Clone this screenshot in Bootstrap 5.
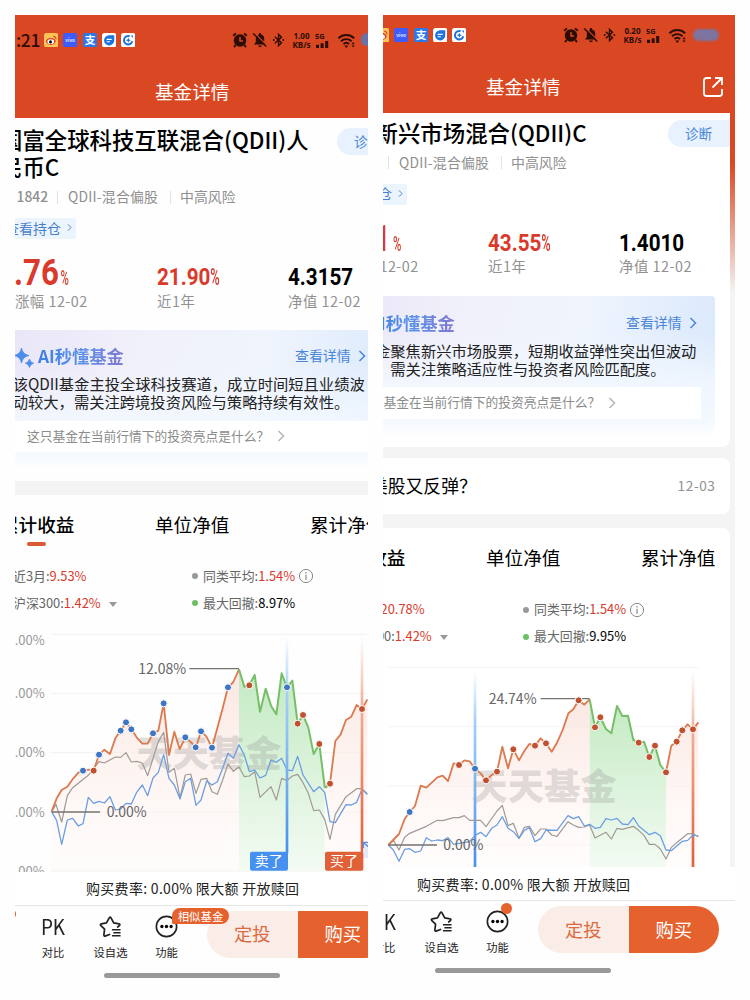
<!DOCTYPE html>
<html lang="zh-CN">
<head>
<meta charset="utf-8">
<meta name="viewport" content="width=device-width, initial-scale=1">
<title>基金详情</title>
<link href="https://cdn.jsdelivr.net/npm/bootstrap@5.3.0/dist/css/bootstrap.min.css" rel="stylesheet">
<style>
body{background:#fefefe;font-family:"Noto Sans CJK SC",sans-serif;color:#000;height:1000px;overflow:hidden;padding:15px;line-height:1}
.phone{width:352.5px;height:970px;overflow:hidden}
.screen{width:424px;margin-left:-35px}
.phone-b .screen{margin-left:-71.5px}
.screen div,.screen span{white-space:nowrap}
.top-bar{background:#d94822}
.status{height:50px;color:#2b0d06;padding-left:36px}
.phone-b .status{height:45px}
.clock{font:500 17.5px/1 "Noto Sans CJK SC";width:28px;letter-spacing:-.4px}
.app-ic{width:14.3px;height:14.3px;margin-right:5px}
.net{font:700 8px/9px "Noto Sans",sans-serif;width:20px;text-align:center;margin-left:6px}
.title-row{height:53px;color:#fff;font-size:18.6px;padding-left:175px}
.phone-b .sheet{background:linear-gradient(#d94822 0,#d94822 50px,#f4f4f4 180px)}
.phone-b .panel{width:418.5px;background:#fff;border-radius:0 0 8px 0}
.fund{padding:8px 0 1.5px 20px;font-weight:500;font-size:22.4px;line-height:27px}
.phone-b .fund{padding:5.5px 0 1.5px 64.6px}
.diag{left:357px;top:10px;width:70px;height:27px;border-radius:14px 0 0 14px;background:#e8f2fe;color:#4a86d4;font-size:13.6px;padding-left:17px}
.phone-b .diag{top:7px;width:61.5px}
.meta{height:31px;font-size:13.9px;color:#8f8f8f;padding-left:20px}
.meta i{width:1px;height:13px;background:#e2e2e2}
.code-no{width:57px;padding-left:16.5px;font-weight:500}
.kind{width:112px;padding-left:10px;letter-spacing:.2px}
.risk{padding-left:9px}
.tag-row{height:32px;padding-left:20px}
.hold{height:21px;width:76px;background:#ecf4fe;color:#4a80c9;font-size:14px;border-radius:2px;padding:0 0 2px 5px}
.nums{height:45px}
.din{font-family:Roboto,sans-serif;font-weight:700;transform-origin:0 50%;display:inline-block}
.red{color:#d93a2b}
.din small{font-weight:500;display:inline-block;transform-origin:0 50%}
.c1{width:177px;padding-left:20px}.c2{width:131px}
.c1,.c2{flex:none}
.labs{height:23px;font-size:14.4px;letter-spacing:.5px;color:#919191;margin-bottom:17px}
.phone-b .labs{margin-bottom:18px}
.ai{height:140.5px;padding-top:10px;background:linear-gradient(180deg,rgba(244,249,255,0) 25%,rgba(243,248,255,.85) 62%,#f3f9fe 88%,#fff 100%),linear-gradient(100deg,#eae6f8 8%,#f0f0fa 35%,#eff4fd 65%,#d8e8fc 100%)}
.phone-b .ai{width:404px;border-radius:0 4px 0 0;}
.ai-head{height:33px;padding-left:34px}
.ai-name{font-size:17.3px;font-weight:700;width:88px;background:linear-gradient(90deg,#3d7fe4,#5b92e8 50%,#8477cf);-webkit-background-clip:text;background-clip:text;color:transparent;line-height:24px}
.blue{color:#4a86d8;font-size:13.9px}
.say{margin:1.5px 0 0 32.7px;font-size:15.3px;line-height:18px;color:#222}
.ask{margin:10.5px 23px 0 33px;height:31.5px;background:#fff;font-size:12.75px;color:#8b8b8b;padding-left:14px}
.ask svg{color:#b5b5b5;margin-left:8px}
.phone-a .ask{margin-right:0}
.phone-b .ask{margin-right:19px}
.band{height:14px;background:#f4f4f4}
.tabs{height:61px;font-size:18.6px;padding-bottom:2px}
.bar{left:47px;top:47.5px;width:19px;height:4px;border-radius:2px;background:#d95a35}
.legend{margin-top:7px;font-size:12.9px;color:#666}
.legend>div{height:27px}
.legend .info-i{margin-left:3px}
.dot-i{width:6px;height:6px;border-radius:50%;background:#999;margin-right:5px}
.fee{height:34px;border-bottom:1px solid #e6e6e6;font-size:14px;letter-spacing:.3px;color:#222;padding-left:106px;background:#fff}
.dock{height:67px;padding-top:5px;color:#222}
.tool{font-size:11.3px}
.pill{height:47px;width:181px;border-radius:24px;overflow:hidden;font-size:18.3px;left:227px;top:5px}
.pill div{width:90.5px;padding-bottom:1px}
.home{width:176px;height:5px;border-radius:3px;background:#999;margin-left:124px}
.bub{background:#e5622f;color:#fff}
svg{display:block;flex:none}
svg text{font-family:"Noto Sans CJK SC",sans-serif}
.pts circle{r:10.5px}
.mid{font-size:24px;transform:translateY(10px) scaleX(.86)}
.mid small{font-size:24px;transform:scaleX(.62)}
.big-a,.big-b{font-size:36px;transform:translateY(6px) scaleX(.87)}
.big-a{margin-left:-4px}
.big-b{margin-left:42px}
.big-a small,.big-b small{font-size:21px;transform:scaleX(.62);margin-left:2px}
.t1{margin-left:20px;font-weight:500}
.l1{width:212px;padding-left:33px}
.news{height:56px;margin:11.5px 0 14px;border-radius:0 8px 8px 0!important;padding:0 14px 0 59px;font-size:17.8px}
.date{font-size:13.6px;color:#919191;letter-spacing:.6px}
.chart-card{border-radius:0 8px 0 0!important}
.tools{padding-left:53px}
.tool svg,.pk{height:23px;margin-top:4px}
.tool svg{width:23px}
.pk{display:block;font:400 21px/23px "Noto Sans CJK SC";transform:scaleX(.9)}
.tool div{margin-top:8px;line-height:12px}
.tl1{width:40px}.tl2{width:36px;margin-left:19.5px}.tl3{width:36px;margin-left:20px}
.simi{left:192px;top:2px;width:57px;height:16px;border-radius:8px 8px 8px 1px;font-size:11.4px;line-height:16px;text-align:center;z-index:2}
.rdot{left:190px;top:2px;width:11.4px;height:11.4px;border-radius:50%}
.buy1{background:#faece7;color:#dd6a40}
</style>
</head>
<body>
<svg width="0" height="0" class="position-absolute">
<defs>
<symbol id="weibo" viewBox="0 0 14 14"><rect width="14" height="14" rx="2.5" fill="#fbc256"/><ellipse cx="6.7" cy="8.2" rx="4.6" ry="3.4" fill="#d8321f"/><ellipse cx="6.6" cy="8.5" rx="3.3" ry="2.3" fill="#fff"/><circle cx="6.4" cy="8.7" r="1.5" fill="#111"/><path d="M9 3.2a2.7 2.7 0 0 1 2.7 3" stroke="#d8321f" stroke-width="1" fill="none"/></symbol>
<symbol id="vivo" viewBox="0 0 14 14"><rect width="14" height="14" rx="2.5" fill="#3d5cfa"/><text x="7" y="8.6" font-size="4.6" text-anchor="middle" fill="#dfe5ff" font-weight="700">vivo</text></symbol>
<symbol id="zhi" viewBox="0 0 14 14"><rect width="14" height="14" rx="2.5" fill="#2a78ea"/><text x="7" y="10.8" font-size="10.5" text-anchor="middle" fill="#fff" font-weight="700">支</text></symbol>
<symbol id="appd" viewBox="0 0 14 14"><rect width="14" height="14" rx="2.5" fill="#fff"/><path d="M7 2.2H12V7A5 5 0 1 1 7 2.2Z" fill="#1d74dc"/><path d="M4.5 6.2h5M4.500 8.6h3.2" stroke="#fff" stroke-width="1.1"/></symbol>
<symbol id="appe" viewBox="0 0 14 14"><rect width="14" height="14" rx="2.5" fill="#fff"/><path d="M8.500 3.300A4.1 4.1 0 1 0 11 8" fill="none" stroke="#1d74dc" stroke-width="1.9"/><path d="M7.2 4.6l.8 1.7 1.8.8-1.8.8-.8 1.7-.8-1.7-1.8-.8 1.8-.8zM9.4 2.5h2.3v2.4z" fill="#1d74dc"/></symbol>
<symbol id="alarm" viewBox="0 0 16 16"><circle cx="8" cy="8.500" r="6.2" fill="#2b0d06"/><path d="M1.2 3.8 4 1.4M14.8 3.8 12 1.4M3.6 13.2 2 15M12.4 13.2l1.6 1.8" stroke="#2b0d06" stroke-width="1.9"/><path d="M8 5v4h3" stroke="#d94822" stroke-width="1.5" fill="none"/></symbol>
<symbol id="bell" viewBox="0 0 16 16"><path d="M2 12.5 3.8 10V6.5A4.3 4.3 0 0 1 7 2.4V1h2v1.4a4.3 4.3 0 0 1 3.2 4.1V10l1.8 2.5zM6.2 13.5h3.6a1.8 1.8 0 0 1-3.6 0z" fill="#2b0d06"/><path d="M2.2.6 15 13.4" stroke="#d94822" stroke-width="1.3"/><path d="M1.2 1.4 14.2 14.6" stroke="#2b0d06" stroke-width="1.4"/></symbol>
<symbol id="bt" viewBox="0 0 14 16"><path d="M3 4.500 10.2 11 7 14V2l3.2 3L3 11.500" fill="none" stroke="#2b0d06" stroke-width="1.5"/><circle cx="1.8" cy="8" r="1" fill="#2b0d06"/><circle cx="12.2" cy="8" r="1" fill="#2b0d06"/></symbol>
<symbol id="sig" viewBox="0 0 18 17"><text x="0" y="6.8" font-size="7.4" style="font-family:'Noto Sans'" font-weight="700" fill="#2b0d06">5G</text><path d="M1 12.8h3V16H1zM5.6 11.2h3V16h-3zM10.2 9h3v7h-3z" fill="#2b0d06"/></symbol>
<symbol id="wifi" viewBox="0 0 20 17"><path d="M1.4 6.2a11.5 11.5 0 0 1 15.8 0M4 9.2a7.8 7.8 0 0 1 10.6 0M6.5 12a4.2 4.2 0 0 1 5.6 0" fill="none" stroke="#2b0d06" stroke-width="1.9"/><path d="M7.3 13.6h4l-2 2.3zM14.5 12.2l1.6-2.2 1.6 2.2zM14.5 13.4l1.6 2.2 1.6-2.2z" fill="#2b0d06"/></symbol>
<symbol id="chev" viewBox="0 0 8 14"><path d="M1.5 2 6.5 7l-5 5" fill="none" stroke="currentColor" stroke-width="1.5"/></symbol>
<symbol id="info" viewBox="0 0 16 16"><circle cx="8" cy="8" r="6.6" fill="none" stroke="#888" stroke-width="1"/><path d="M8 6.8v5M8 4v1.4" stroke="#888" stroke-width="1.2"/></symbol>
<symbol id="spark" viewBox="0 0 20 20"><path d="M7.5 0Q8.6 6.4 15 7.5 8.6 8.6 7.5 15 6.4 8.6 0 7.5 6.4 6.4 7.5 0ZM15.5 11q.7 3.6 4.2 4.2-3.5.7-4.2 4.3-.7-3.6-4.2-4.3 3.5-.6 4.2-4.2z" fill="#4c8cea" stroke="#4c8cea" stroke-width=".8"/></symbol>
<symbol id="star" viewBox="0 0 24 24"><path d="M11 20.3 6.3 22Q5 22 5.1 20.8L5.8 14.8 1.7 10.8Q1 9.7 2.4 9.3L7.8 8.2 10.8 2.8Q11.6 1.8 12.4 2.8L15.3 8.2 21 9.3Q22.3 9.7 21.5 10.8L19.5 12.5" fill="none" stroke="#222" stroke-width="1.8" stroke-linejoin="round" stroke-linecap="round"/><path d="M13.5 15.3H22.500M15 18.5h7.500M13.5 21.7H22.500" stroke="#222" stroke-width="1.6"/></symbol>
<symbol id="more" viewBox="0 0 24 24"><circle cx="12" cy="12" r="10.6" fill="none" stroke="#222" stroke-width="1.700"/><circle cx="7.2" cy="12" r="1.700"/><circle cx="12" cy="12" r="1.700"/><circle cx="16.8" cy="12" r="1.700"/></symbol>
<linearGradient id="gOr" x1="0" y1="0" x2="0" y2="1"><stop offset="0" stop-color="#fae3dc" stop-opacity=".85"/><stop offset="1" stop-color="#fff6f3" stop-opacity=".25"/></linearGradient>
<linearGradient id="gGr" x1="0" y1="0" x2="0" y2="1"><stop offset="0" stop-color="#c3eac2"/><stop offset="1" stop-color="#f3fbf3"/></linearGradient>
<linearGradient id="lBl" x1="0" y1="0" x2="0" y2="1"><stop offset="0" stop-color="#a8d4fb" stop-opacity="0"/><stop offset=".25" stop-color="#a5d0f9"/><stop offset=".6" stop-color="#7db4f0"/><stop offset="1" stop-color="#4690f0"/></linearGradient>
<linearGradient id="lOr" x1="0" y1="0" x2="0" y2="1"><stop offset="0" stop-color="#f3c0aa" stop-opacity="0"/><stop offset=".3" stop-color="#efb199"/><stop offset="1" stop-color="#e06037"/></linearGradient>
</defs>
</svg>

<div class="d-flex justify-content-between">
<!-- 左侧手机 -->
<section class="phone phone-a"><div class="screen">
 <div class="top-bar">
  <div class="status d-flex align-items-center">
   <span class="clock">:21</span>
   <svg class="app-ic"><use href="#weibo"/></svg><svg class="app-ic"><use href="#vivo"/></svg><svg class="app-ic"><use href="#zhi"/></svg><svg class="app-ic"><use href="#appd"/></svg><svg class="app-ic"><use href="#appe"/></svg>
   <svg width="16" height="16" style="margin-left:92px"><use href="#alarm"/></svg><svg width="16" height="16" class="ms-1"><use href="#bell"/></svg><svg width="13" height="16" class="ms-1"><use href="#bt"/></svg>
   <div class="net">1.00<br>KB/s</div><svg width="18" height="17" class="ms-1"><use href="#sig"/></svg><svg width="20" height="17" class="ms-1"><use href="#wifi"/></svg>
   <svg width="28" height="14" class="ms-1"><rect width="28" height="13" rx="6" fill="#6c70a8"/></svg>
  </div>
  <div class="title-row d-flex align-items-center">基金详情</div>
 </div>
 <div class="sheet"><div class="panel position-relative">
  <div class="fund">国富全球科技互联混合(QDII)人<br>民币C</div>
  <div class="diag position-absolute d-flex align-items-center">诊断</div>
  <div class="meta d-flex align-items-center"><span class="code-no">1842</span><i></i><span class="kind">QDII-混合偏股</span><i></i><span class="risk">中高风险</span></div>
  <div class="tag-row d-flex align-items-center"><div class="hold d-flex align-items-center">查看持仓<svg width="5" height="9" style="margin-left:6px"><use href="#chev"/></svg></div></div>
  <div class="nums d-flex align-items-center"><div class="c1"><span class="din red big-a">0.76<small>%</small></span></div><div class="c2"><span class="din red mid">21.90<small>%</small></span></div><div><span class="din mid">4.3157</span></div></div>
  <div class="labs d-flex align-items-center"><span class="c1">日涨幅 12-02</span><span class="c2">近1年</span><span>净值 12-02</span></div>
  <div class="ai">
   <div class="ai-head d-flex align-items-center"><svg width="20" height="20" class="mt-1"><use href="#spark"/></svg><span class="ai-name ms-1">AI秒懂基金</span><span class="blue d-flex align-items-center" style="margin-left:169px">查看详情<svg width="8" height="14" style="margin-left:7px"><use href="#chev"/></svg></span></div>
   <div class="say">该QDII基金主投全球科技赛道，成立时间短且业绩波<br>动较大，需关注跨境投资风险与策略持续有效性。</div>
   <div class="ask d-flex align-items-center">这只基金在当前行情下的投资亮点是什么？<svg width="8" height="14"><use href="#chev"/></svg></div>
  </div>
  <div style="height:10.5px"></div>
 </div>
 <div class="band"></div>
 <div class="tabs position-relative d-flex align-items-center"><span style="width:155px" class="t1">累计收益</span><span style="width:155px">单位净值</span><span>累计净值</span><i class="bar position-absolute"></i></div>
 <div class="legend">
  <div class="d-flex align-items-center"><span class="l1">近3月:<b class="fw-normal red">9.53%</b></span><i class="dot-i"></i><span>同类平均:<b class="fw-normal red">1.54%</b></span><svg width="16" height="16" class="info-i"><use href="#info"/></svg></div>
  <div class="d-flex align-items-center"><span class="l1">沪深300:<b class="fw-normal red">1.42%</b><svg class="d-inline ms-2" width="8" height="5"><path d="M0 0h8L4 5z" fill="#999"/></svg></span><i class="dot-i" style="background:#6cc065"></i><span>最大回撤:<b class="fw-normal text-black">8.97%</b></span></div>
 </div>
 <svg style="margin-top:15.5px" width="424" height="239.5" viewBox="-60 36 1272 718.5">
  <path d="M152 43H1102M152 220H1102M152 398H1102M152 576H1102M152 753H1102" stroke="#f1f1f1" stroke-width="3"/>
  <path d="M155 575 170 535 185 510 202 500 220 475 235 458 249 452 265 449 281 452 297 404 313 389 330 402 346 355 362 332 378 307 394 328 410 352 427 371 443 371 459 340 475 332 491 250 507 405 523 335 539 387 556 352 572 366 588 382 603 334 619 349 636 383 668 265 684 202 700 186 717 148V753H155ZM974 503 990 491 1006 363 1022 343 1038 300 1054 290 1070 255 1086 267 1102 238V753H974Z" fill="url(#gOr)"/>
  <path d="M717 148 733 200 748 196 764 165 780 275 797 206 813 257 829 283 845 160 861 202 877 182 893 311 909 285 925 323 941 402 958 372 974 500V753H717Z" fill="url(#gGr)"/>
  <text x="409" y="441" font-size="109" font-weight="900" fill="#888" fill-opacity=".27">天天基金</text>
  <g fill="none" stroke-linejoin="round">
  <path d="M155 575 168 553 185 606 202 527 218 503 265 466 297 425 313 429 346 411 362 412 378 398 394 426 410 424 427 429 443 467 459 415 475 365 491 337 507 457 523 445 540 533 556 465 572 462 588 520 603 478 620 475 636 515 652 523 668 480 684 432 700 454 717 441 733 470 748 468 764 455 780 532 813 500 829 540 845 475 861 482 877 468 893 463 909 488 925 520 941 572 958 570 974 598 990 658 1006 583 1038 530 1070 506 1086 506 1102 521" stroke="#a09a96" stroke-width="3.6"/>
  <path d="M155 575 170 602 185 673 202 600 218 595 235 618 249 611 265 532 281 550 297 544 313 549 330 530 346 570 362 567 378 550 394 552 410 517 427 495 443 527 459 474 475 457 491 404 507 475 523 495 540 537 556 485 572 475 588 556 603 540 620 483 636 495 652 485 668 445 684 400 700 415 717 374 733 405 748 455 764 450 780 474 797 466 813 420 829 427 845 415 861 450 877 452 893 409 909 465 941 515 958 500 974 517 990 605 1006 608 1038 554 1054 555 1070 547 1086 508 1102 524" stroke="#6a9de2" stroke-width="3.8"/>
  <path d="M155 575 170 535 185 510 202 500 220 475 235 458 249 452 265 449 281 452 297 404 313 389 330 402 346 355 362 332 378 307 394 328 410 352 427 371 443 371 459 340 475 332 491 250 507 405 523 335 539 387 556 352 572 366 588 382 603 334 619 349 636 383 668 265 684 202 700 186 717 148M974 503 990 491 1006 363 1022 343 1038 300 1054 290 1070 255 1086 267 1102 238" stroke="#dd7a50" stroke-width="5.5"/>
  <path d="M717 148 733 200 748 196 764 165 780 275 797 206 813 257 829 283 845 160 861 202 877 182 893 311 909 285 925 323 941 402 958 372 974 500 982 503" stroke="#76bf68" stroke-width="6"/>
  <path d="M155 576H300M568 146H717" stroke="#77736f" stroke-width="4"/>
  </g>
  <rect x="857" y="50" width="8" height="650" fill="url(#lBl)"/><rect x="1082" y="50" width="8" height="650" fill="url(#lOr)"/>
  <path d="M1089 668h16v46h-16z" fill="#e2e9fb"/><path d="M1090 685v-18h16M1091 668l14 12" stroke="#5c8be0" stroke-width="4" fill="none"/>
  <rect x="750" y="695" width="114" height="57" rx="6" fill="#4690f0"/><rect x="975" y="695" width="115" height="57" rx="6" fill="#e06037"/>
  <g fill="#fff" font-size="42"><text x="764" y="739">卖了</text><text x="990" y="739">买了</text></g>
  <g class="pts" fill="#3f76c4" stroke="#fff" stroke-width="3"><circle cx="249" cy="452" r="9"/><circle cx="297" cy="404" r="9"/><circle cx="362" cy="332" r="9"/><circle cx="378" cy="307" r="9"/><circle cx="394" cy="328" r="9"/><circle cx="459" cy="340" r="9"/><circle cx="491" cy="250" r="9"/><circle cx="556" cy="352" r="9"/><circle cx="587" cy="382" r="9"/><circle cx="603" cy="334" r="9"/><circle cx="636" cy="383" r="9"/><circle cx="684" cy="202" r="9"/><circle cx="861" cy="202" r="9"/></g>
  <g class="pts" fill="#bf5030" stroke="#fff" stroke-width="3"><circle cx="281" cy="452" r="9"/><circle cx="748" cy="196" r="9"/><circle cx="893" cy="311" r="9"/><circle cx="909" cy="285" r="9"/><circle cx="958" cy="372" r="9"/><circle cx="990" cy="491" r="9"/><circle cx="1086" cy="267" r="9"/></g>
  <g fill="#999" font-size="39" text-anchor="end"><text x="134" y="74">15.00%</text><text x="134" y="234">10.00%</text><text x="134" y="412">5.00%</text><text x="134" y="590">0.00%</text><text x="134" y="767">-5.00%</text></g>
  <g fill="#666" font-size="42"><text x="415" y="161">12.08%</text><text x="320" y="591">0.00%</text></g>
 </svg>
 </div>
 <div class="fee d-flex align-items-center"><span>购买费率: 0.00% 限大额 开放赎回</span></div>
 <div class="dock position-relative">
  <svg width="424" height="50" class="position-absolute" style="left:0;top:0"><circle cx="30.5" cy="8" r="5.6" fill="#e5622f"/></svg>
  <div class="d-flex text-center tools"><div class="tool tl1"><span class="pk">PK</span><div>对比</div></div><div class="tool tl2"><svg class="mx-auto"><use href="#star"/></svg><div>设自选</div></div><div class="tool tl3"><svg class="mx-auto"><use href="#more"/></svg><div>功能</div></div></div>
  <div class="bub simi position-absolute">相似基金</div>
  <div class="pill position-absolute d-flex"><div class="buy1 d-flex align-items-center justify-content-center">定投</div><div class="bub d-flex align-items-center justify-content-center">购买</div></div>
 </div>
 <div class="home"></div>
</div></section>

<!-- 右侧手机 -->
<section class="phone phone-b"><div class="screen">
 <div class="top-bar">
  <div class="status d-flex align-items-center" style="padding-bottom:5px">
   <span class="clock">:21</span>
   <svg class="app-ic"><use href="#weibo"/></svg><svg class="app-ic"><use href="#vivo"/></svg><svg class="app-ic"><use href="#zhi"/></svg><svg class="app-ic"><use href="#appd"/></svg><svg class="app-ic"><use href="#appe"/></svg>
   <svg width="16" height="16" style="margin-left:92px"><use href="#alarm"/></svg><svg width="16" height="16" class="ms-1"><use href="#bell"/></svg><svg width="13" height="16" class="ms-1"><use href="#bt"/></svg>
   <div class="net">0.20<br>KB/s</div><svg width="18" height="17" class="ms-1"><use href="#sig"/></svg><svg width="20" height="17" class="ms-1"><use href="#wifi"/></svg>
   <svg width="30" height="15" class="ms-1"><rect x="1" y="1" width="26" height="12" rx="6" fill="#7d74a0" style="filter:blur(1.2px)"/></svg>
  </div>
  <div class="title-row d-flex align-items-center">基金详情<svg width="22" height="22" viewBox="0 0 22 22" style="margin-left:142px"><path d="M9 2H4.5Q2 2 2 4.5V17.5Q2 20 4.5 20H17.5Q20 20 20 17.5V13M13 2h7v7M20 2 10.5 11.5" fill="none" stroke="#fff" stroke-width="1.8"/></svg></div>
 </div>
 <div class="sheet"><div class="panel position-relative">
  <div class="fund">新兴市场混合(QDII)C</div>
  <div class="diag position-absolute d-flex align-items-center">诊断</div>
  <div class="meta d-flex align-items-center"><span class="code-no"></span><i></i><span class="kind">QDII-混合偏股</span><i></i><span class="risk">中高风险</span></div>
  <div class="tag-row d-flex align-items-center"><div class="hold d-flex align-items-center">查看持仓<svg width="5" height="9" style="margin-left:6px"><use href="#chev"/></svg></div></div>
  <div class="nums d-flex align-items-center"><div class="c1"><span class="din red big-b">1<small>%</small></span></div><div class="c2"><span class="din red mid">43.55<small>%</small></span></div><div><span class="din mid">1.4010</span></div></div>
  <div class="labs d-flex align-items-center"><span class="c1">日涨幅 12-02</span><span class="c2">近1年</span><span>净值 12-02</span></div>
  <div class="ai">
   <div class="ai-head d-flex align-items-center"><svg width="20" height="20" class="mt-1"><use href="#spark"/></svg><span class="ai-name ms-1">AI秒懂基金</span><span class="blue d-flex align-items-center" style="margin-left:169px">查看详情<svg width="8" height="14" style="margin-left:7px"><use href="#chev"/></svg></span></div>
   <div class="say" style="margin-left:64px">金聚焦新兴市场股票，短期收益弹性突出但波动<br><span style="padding-left:15.3px">需关注策略适应性与投资者风险匹配度。</span></div>
   <div class="ask d-flex align-items-center" style="margin-right:14px">这只基金在当前行情下的投资亮点是什么？<svg width="8" height="14"><use href="#chev"/></svg></div>
  </div>
  <div style="height:10px"></div>
 </div>
 <div class="panel news d-flex align-items-center justify-content-between"><span>美股又反弹？</span><span class="date">12-03</span></div>
 <div class="panel chart-card">
 <div class="tabs position-relative d-flex align-items-center"><span style="width:155px" class="t1">累计收益</span><span style="width:155px">单位净值</span><span>累计净值</span></div>
 <div class="legend">
  <div class="d-flex align-items-center"><span class="l1">近3月:<b class="fw-normal red">20.78%</b></span><i class="dot-i"></i><span>同类平均:<b class="fw-normal red">1.54%</b></span><svg width="16" height="16" class="info-i"><use href="#info"/></svg></div>
  <div class="d-flex align-items-center"><span class="l1">沪深300:<b class="fw-normal red">1.42%</b><svg class="d-inline ms-2" width="8" height="5"><path d="M0 0h8L4 5z" fill="#999"/></svg></span><i class="dot-i" style="background:#6cc065"></i><span>最大回撤:<b class="fw-normal text-black">9.95%</b></span></div>
 </div>
 <svg style="margin-top:15px" width="418" height="202" viewBox="-192 45 1254 606">
  <path d="M40 52H970M40 230H970M40 408H970M40 585H970" stroke="#f3f3f3" stroke-width="3"/>
  <path d="M40 585 72 552 89 507 104 486 120 468 137 407 154 413 187 382 203 377 219 393 236 340 252 345 268 331 284 334 300 356 317 370 333 391 350 375 366 365 382 290 399 355 415 298 432 331 448 303 463 282 480 287 497 265 513 280 530 305 546 278 563 240 580 190 595 178 611 151 628 164 644 148V651H40ZM873 367 889 287 905 275 922 241 938 223 954 238 970 217V651H873Z" fill="url(#gOr)"/>
  <path d="M644 148 660 232 676 202 693 237 709 250 726 168 742 198 759 197 775 270 791 278 807 275 823 321 840 287 856 345 873 367V651H644Z" fill="url(#gGr)"/>
  <text x="289" y="450" font-size="109" font-weight="900" fill="#888" fill-opacity=".27">天天基金</text>
  <rect x="296" y="60" width="8" height="591" fill="url(#lBl)"/><rect x="950" y="60" width="8" height="591" fill="url(#lOr)"/>
  <g fill="none" stroke-linejoin="round">
  <path d="M40 585 55 570 72 600 89 562 104 550 154 529 187 511 203 512 236 503 252 503 268 497 284 511 317 511 333 530 366 483 382 466 399 527 415 520 432 565 448 532 463 529 480 557 497 537 513 537 530 555 546 559 579 515 595 525 611 532 628 531 644 525 660 564 693 547 709 567 726 535 742 538 775 529 791 541 807 556 823 583 840 583 856 597 873 627 889 592 905 578 938 551 954 551 970 560" stroke="#a09a96" stroke-width="3.6"/>
  <path d="M40 585 55 600 72 634 89 598 104 596 120 607 137 603 154 563 170 573 187 570 203 572 219 563 236 583 252 580 284 575 300 556 317 547 333 560 350 535 366 525 382 500 399 535 415 545 432 565 448 541 463 533 480 575 497 566 513 540 546 541 579 497 595 506 611 500 628 528 644 523 660 535 676 532 693 506 709 510 726 505 742 522 759 524 775 503 791 528 823 554 840 547 856 557 873 600 889 602 905 588 922 574 938 571 954 555 970 558" stroke="#6a9de2" stroke-width="3.8"/>
  <path d="M40 585 72 552 89 507 104 486 120 468 137 407 154 413 187 382 203 377 219 393 236 340 252 345 268 331 284 334 300 356 317 370 333 391 350 375 366 365 382 290 399 355 415 298 432 331 448 303 463 282 480 287 497 265 513 280 530 305 546 278 563 240 580 190 595 178 611 151 628 164 644 148M873 367 889 287 905 275 922 241 938 223 954 238 970 217" stroke="#dd7a50" stroke-width="5.5"/>
  <path d="M644 148 660 232 676 202 693 237 709 250 726 168 742 198 759 197 775 270 791 278 807 275 823 321 840 287 856 345 873 367" stroke="#76bf68" stroke-width="6"/>
  <path d="M40 585H186M497 146H644" stroke="#77736f" stroke-width="4"/>
  </g>
  <g class="pts" fill="#3f76c4" stroke="#fff" stroke-width="3"><circle cx="104" cy="486" r="9"/><circle cx="300" cy="356" r="9"/></g>
  <g class="pts" fill="#bf5030" stroke="#fff" stroke-width="3"><circle cx="252" cy="345" r="9"/><circle cx="333" cy="391" r="9"/><circle cx="366" cy="365" r="9"/><circle cx="415" cy="298" r="9"/><circle cx="480" cy="287" r="9"/><circle cx="513" cy="280" r="9"/><circle cx="611" cy="151" r="9"/><circle cx="660" cy="232" r="9"/><circle cx="676" cy="202" r="9"/><circle cx="791" cy="278" r="9"/><circle cx="823" cy="321" r="9"/><circle cx="840" cy="287" r="9"/><circle cx="873" cy="367" r="9"/><circle cx="905" cy="275" r="9"/><circle cx="922" cy="241" r="9"/><circle cx="954" cy="238" r="9"/></g>
  <g fill="#666" font-size="42"><text x="341" y="161">24.74%</text><text x="205" y="600">0.00%</text></g>
 </svg>
 </div></div>
 <div class="fee d-flex align-items-center"><span>购买费率: 0.00% 限大额 开放赎回</span></div>
 <div class="dock position-relative">
  <div class="d-flex text-center tools"><div class="tool tl1"><span class="pk">PK</span><div>对比</div></div><div class="tool tl2"><svg class="mx-auto"><use href="#star"/></svg><div>设自选</div></div><div class="tool tl3"><svg class="mx-auto"><use href="#more"/></svg><div>功能</div></div></div>
  <i class="bub rdot position-absolute"></i>
  <div class="pill position-absolute d-flex"><div class="buy1 d-flex align-items-center justify-content-center">定投</div><div class="bub d-flex align-items-center justify-content-center">购买</div></div>
 </div>
 <div class="home"></div>
</div></section>
</div>
<script src="https://cdn.jsdelivr.net/npm/bootstrap@5.3.0/dist/js/bootstrap.bundle.min.js"></script>
</body>
</html>
